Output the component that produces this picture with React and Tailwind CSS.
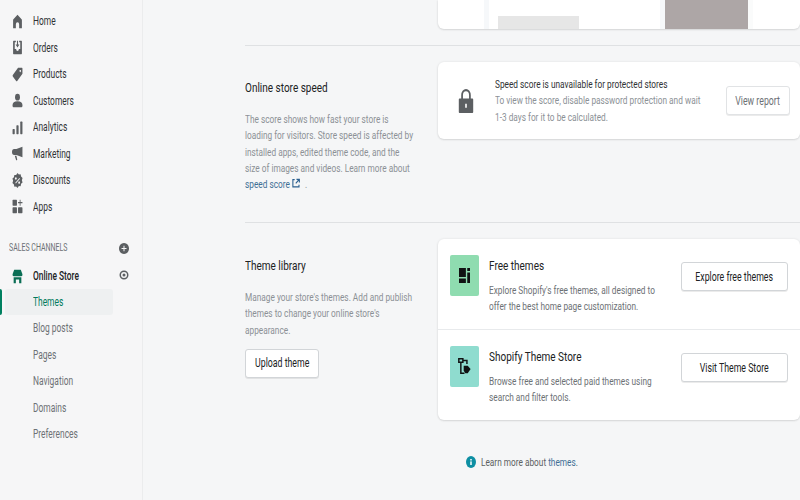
import React from "react";

const font = { fontFamily: 'Roboto, "Open Sans", sans-serif' };

const Icons = {
  home: <path d="M10 1 3 6.500a2 2 0 0 0-1 2V19h5v-5a3 3 0 0 1 6 0v5h5V8.500a2 2 0 0 0-1-2z" />,
  orders: (
    <path fillRule="evenodd" d="M3 1h4v2H5v9h2.500a2.500 2.500 0 0 0 5 0H15V3h-2V1h4a1 1 0 0 1 1 1v16a1 1 0 0 1-1 1H3a1 1 0 0 1-1-1V2a1 1 0 0 1 1-1zm6 0h2v5h2.500L10 10 6.500 6H9z" />
  ),
  products: <path fillRule="evenodd" d="M11 1h7a1 1 0 0 1 1 1v7l-9.500 9.500a1.500 1.500 0 0 1-2 0L1.500 12.500a1.500 1.500 0 0 1 0-2zM15 4a1.300 1.300 0 1 0 .01 0z" />,
  customers: (
    <>
      <circle cx="10" cy="5.500" r="4.500" />
      <path d="M1 16c0-3 3-5 9-5s9 2 9 5v1a2 2 0 0 1-2 2H3a2 2 0 0 1-2-2z" />
    </>
  ),
  analytics: (
    <>
      <rect x="1" y="12" width="4" height="7" rx="1" />
      <rect x="8" y="7" width="4" height="12" rx="1" />
      <rect x="15" y="2" width="4" height="17" rx="1" />
    </>
  ),
  marketing: <path d="M19 1v14L8 12H4a3 3 0 0 1 0-8h4zM5 13h3l1.500 5a1 1 0 0 1-1 1H7.500z" />,
  discounts: (
    <path fillRule="evenodd" d="M10 0l2.500 2 3.200-.3.800 3.100 2.700 1.800-1.200 3 1.200 3-2.700 1.800-.8 3.100-3.200-.3L10 20l-2.500-2-3.200.3-.8-3.100L.8 13.400l1.200-3-1.200-3L3.500 5.600l.8-3.100 3.200.3zM7 5.500a1.700 1.700 0 1 0 .01 0zm6.500 1L6 13l1 1 7.500-6.500zM13 11a1.700 1.700 0 1 0 .01 0z" />
  ),
  apps: (
    <>
      <rect x="1" y="1" width="8" height="8" rx="1" />
      <rect x="1" y="11" width="8" height="8" rx="1" />
      <rect x="11" y="11" width="8" height="8" rx="1" />
      <path d="M14 1h1.500v3H19v1.500h-3.500V9H14V5.500h-3V4h3z" />
    </>
  ),
};

function NavIcon({ name }) {
  return (
    <svg viewBox="0 0 20 20" preserveAspectRatio="none" className="h-[15px] w-[11px] fill-[#5c5f62]">
      {Icons[name]}
    </svg>
  );
}

const main = [
  ["home", "Home"],
  ["orders", "Orders"],
  ["products", "Products"],
  ["customers", "Customers"],
  ["analytics", "Analytics"],
  ["marketing", "Marketing"],
  ["discounts", "Discounts"],
  ["apps", "Apps"],
];

const sub = ["Blog posts", "Pages", "Navigation", "Domains", "Preferences"];

const navText = "block origin-left scale-x-[0.7] whitespace-nowrap text-[12px] leading-[16px]";
const bodyText = "block origin-left scale-x-[0.72] whitespace-nowrap text-[11.500px] leading-[16.300px]";
const headText = "block origin-left scale-x-[0.8] whitespace-nowrap text-[12.500px] leading-[16px]";

function Sidebar() {
  return (
    <aside className="flex h-[500px] w-[143px] shrink-0 flex-col border-r border-[#ebeced] bg-[#f6f6f7] pt-[8px]">
      {main.map(([k, l]) => (
        <div key={k} className="flex h-[26.500px] items-center pl-[12px]">
          <span className="flex w-[21px]">
            <NavIcon name={k} />
          </span>
          <span className={`${navText} text-[#303235]`}>{l}</span>
        </div>
      ))}
      <div className="mt-[16px] flex h-[24px] items-center justify-between pl-[9px] pr-[13px]">
        <span className="block origin-left scale-x-[0.7] whitespace-nowrap text-[10px] leading-[14px] text-[#6d7175]">SALES CHANNELS</span>
        <svg viewBox="0 0 20 20" preserveAspectRatio="none" className="h-[11px] w-[10px] fill-[#5c5f62]">
          <path fillRule="evenodd" d="M10 0a10 10 0 1 0 .01 0zM9 5h2v4h4v2h-4v4H9v-4H5V9h4z" />
        </svg>
      </div>
      <div className="mt-[3px] flex h-[26px] items-center justify-between pl-[12px] pr-[13px]">
        <div className="flex items-center">
          <span className="flex w-[21px]">
            <svg viewBox="0 0 20 20" preserveAspectRatio="none" className="h-[15px] w-[11px] fill-[#0b6e55]">
              <path d="M4 1h12l3 6a2.500 2.500 0 0 1-2 2.800H3A2.500 2.500 0 0 1 1 7zM3 11h14v8h-4v-5H7v5H3z" />
            </svg>
          </span>
          <span className={`${navText} font-medium text-[#202223]`}>Online Store</span>
        </div>
        <svg viewBox="0 0 20 20" preserveAspectRatio="none" className="mb-[3px] h-[10px] w-[10px] fill-none stroke-[#5c5f62] stroke-[3]">
          <circle cx="10" cy="10" r="7.500" />
          <circle cx="10" cy="10" r="1.500" fill="#5c5f62" />
        </svg>
      </div>
      <div className="relative flex h-[26px] items-center pl-[33px]">
        <span className="absolute left-0 top-0 h-[26px] w-[2px] rounded-r bg-[#008060]" />
        <span className="absolute left-[5px] top-0 h-[26px] w-[108px] rounded-[3px] bg-[#eef0f1]" />
        <span className={`relative ${navText} text-[#007a5c]`}>Themes</span>
      </div>
      {sub.map((l) => (
        <div key={l} className="flex h-[26.500px] items-center pl-[33px]">
          <span className={`${navText} text-[#6d7175]`}>{l}</span>
        </div>
      ))}
    </aside>
  );
}

function SectionText({ title, children }) {
  return (
    <div className="w-[193px] shrink-0">
      <h2 className={`${headText} text-[#202223]`}>{title}</h2>
      <div className={`mt-[15px] ${bodyText} text-[#8c9196]`}>{children}</div>
    </div>
  );
}

const cardCls = "rounded-[6px] bg-white shadow-[0_0_3px_rgba(23,24,24,0.08),0_1px_2px_rgba(0,0,0,0.1)]";

function Btn({ children, className = "", textCls = "text-[#202223]" }) {
  return (
    <button className={`flex items-center justify-center rounded-[3px] border border-[#d2d5d8] bg-white shadow-[0_1px_0_rgba(0,0,0,0.08)] ${className}`}>
      <span className={`block shrink-0 origin-center scale-x-[0.73] whitespace-nowrap text-[12px] leading-[16px] ${textCls}`}>{children}</span>
    </button>
  );
}

function ThemeRow({ bg, icon, title, desc, btn }) {
  return (
    <div className="flex h-[90px] items-start pl-[12px] pr-[12px] pt-[16px]">
      <div className={`flex h-[41px] w-[29px] shrink-0 items-center justify-center rounded-[2px] ${bg}`}>{icon}</div>
      <div className="ml-[10px] w-[180px] pt-[3px]">
        <h3 className={`${headText} text-[#202223]`}>{title}</h3>
        <p className={`mt-[8px] ${bodyText} text-[#6d7175]`}>{desc}</p>
      </div>
      <Btn className="ml-auto mt-[7px] h-[29px] w-[107px]">{btn}</Btn>
    </div>
  );
}

export default function App() {
  return (
    <div style={font} className="flex h-[500px] w-[800px] overflow-hidden bg-[#f5f6f7]">
      <Sidebar />
      <main className="flex-1 pl-[102px]">
        <div className="flex justify-end">
          <div className={`${cardCls} flex h-[29px] w-[362px] overflow-hidden rounded-t-none`}>
            <div className="w-[46px]" />
            <div className="w-[5px] bg-[#f6f8fa]" />
            <div className="w-[171px] pl-[9px] pt-[16px]">
              <div className="h-[13px] w-[81px] bg-[#e6e6e6]" />
            </div>
            <div className="w-[5px] bg-[#f6f8fa]" />
            <div className="w-[83px] bg-[#ada6a6]" />
            <div className="w-[5px] bg-[#fafbfb]" />
          </div>
        </div>
        <div className="mt-[16px] h-px bg-[#dfe1e3]" />

        <section className="flex h-[176px] pt-[16px]">
          <div className="pt-[18px]">
            <SectionText title="Online store speed">
              The score shows how fast your store is
              <br />
              loading for visitors. Store speed is affected by
              <br />
              installed apps, edited theme code, and the
              <br />
              size of images and videos. Learn more about
              <br />
              <span className="text-[#3f6f95]">speed score</span>
              <svg viewBox="0 0 12 12" className="mx-[3px] inline h-[10px] w-[12px] fill-none stroke-[#2a5f8f] stroke-[1.500] align-[0px]" preserveAspectRatio="none">
                <path d="M4 2H1.500v8.500H10V8M6.500 1.500H10.500V5.500M10.500 1.500 5.500 6.500" />
              </svg>{" "}
              .
            </SectionText>
          </div>
          <div className={`${cardCls} flex h-[77px] w-[362px] items-center`}>
            <svg viewBox="0 0 20 24" preserveAspectRatio="none" className="ml-[20px] h-[25px] w-[16px] shrink-0 fill-[#5c5f62]">
              <path fillRule="evenodd" d="M4 10V7a6 6 0 0 1 12 0v3h2a1 1 0 0 1 1 1v12a1 1 0 0 1-1 1H2a1 1 0 0 1-1-1V11a1 1 0 0 1 1-1zm2.200 0h7.600V7a3.800 3.800 0 0 0-7.600 0zM9 15v4h2v-4z" />
            </svg>
            <div className="ml-[21px] w-[215px]">
              <p className={`${bodyText} text-[#303235]`}>Speed score is unavailable for protected stores</p>
              <p className={`${bodyText} text-[#8c9196]`}>
                To view the score, disable password protection and wait
                <br />
                1-3 days for it to be calculated.
              </p>
            </div>
            <Btn className="ml-auto mr-[10px] h-[29px] w-[64px] !border-[#e1e3e5]" textCls="text-[#6d7175]">View report</Btn>
          </div>
        </section>

        <div className="h-px bg-[#dfe1e3]" />

        <section className="flex pt-[16px]">
          <div className="pt-[19px]">
            <SectionText title="Theme library">
              Manage your store's themes. Add and publish
              <br />
              themes to change your online store's
              <br />
              appearance.
            </SectionText>
            <Btn className="mt-[11px] h-[29px] w-[74px]">Upload theme</Btn>
          </div>
          <div className={`${cardCls} h-[181px] w-[362px]`}>
            <ThemeRow
              bg="bg-[#8fdcb0]"
              title="Free themes"
              btn="Explore free themes"
              desc={
                <>
                  Explore Shopify's free themes, all designed to
                  <br />
                  offer the best home page customization.
                </>
              }
              icon={
                <svg viewBox="0 0 16 20" preserveAspectRatio="none" className="h-[15px] w-[11px] fill-[#111213]">
                  <path d="M0 0h10v12H0zM12 0h4v4h-4zM12 6h4v14h-4zM0 14h10v6H0z" />
                </svg>
              }
            />
            <div className="h-px bg-[#e8eaec]" />
            <ThemeRow
              bg="bg-[#8fdccf]"
              title="Shopify Theme Store"
              btn="Visit Theme Store"
              desc={
                <>
                  Browse free and selected paid themes using
                  <br />
                  search and filter tools.
                </>
              }
              icon={
                <svg viewBox="0 0 16 20" preserveAspectRatio="none" className="h-[17px] w-[13px]">
                  <path d="M1 1h5v4H1zM3.500 5v13H8M6 3h5V7" fill="none" stroke="#111213" strokeWidth="1.800" />
                  <path d="M7 9h5l3.500 4-3.500 5H9l-2-3z" fill="#111213" />
                </svg>
              }
            />
          </div>
        </section>

        <div className="mt-[34px] flex items-center pl-[221px]">
          <svg viewBox="0 0 20 20" preserveAspectRatio="none" className="h-[12px] w-[10px]">
            <circle cx="10" cy="10" r="10" fill="#0e8fa3" />
            <rect x="8.500" y="9" width="3" height="6" fill="#fff" />
            <rect x="8.500" y="5" width="3" height="2.500" fill="#fff" />
          </svg>
          <span className={`ml-[5px] ${bodyText} text-[#5c5f62]`}>
            Learn more about <span className="text-[#3f6f95]">themes</span>.
          </span>
        </div>
      </main>
    </div>
  );
}
